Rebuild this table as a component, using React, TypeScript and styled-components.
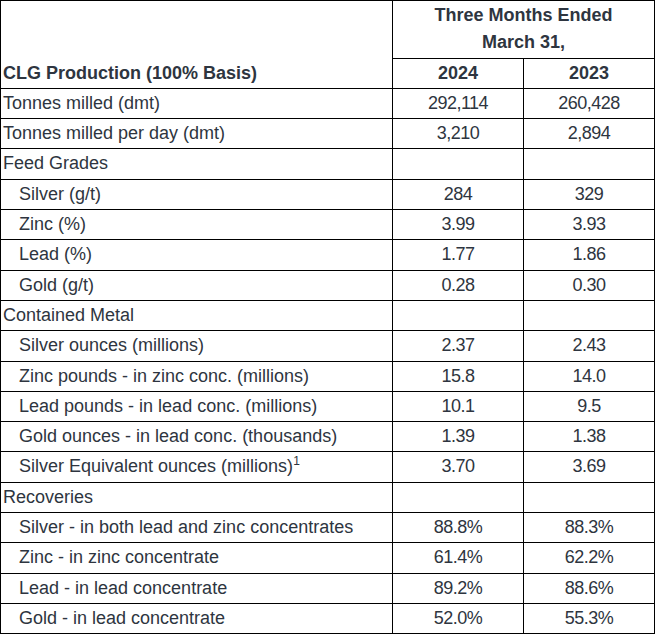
import React from 'react';
import styled, { createGlobalStyle } from 'styled-components';

const GlobalStyle = createGlobalStyle`
  body {
    margin: 0;
    background: #fff;
  }
`

type Row = {
  label: string;
  values?: [string, string];
  indent?: boolean;
  note?: string;
};

const rows: Row[] = [
  { label: 'Tonnes milled (dmt)', values: ['292,114', '260,428'] },
  { label: 'Tonnes milled per day (dmt)', values: ['3,210', '2,894'] },
  { label: 'Feed Grades' },
  { label: 'Silver (g/t)', values: ['284', '329'], indent: true },
  { label: 'Zinc (%)', values: ['3.99', '3.93'], indent: true },
  { label: 'Lead (%)', values: ['1.77', '1.86'], indent: true },
  { label: 'Gold (g/t)', values: ['0.28', '0.30'], indent: true },
  { label: 'Contained Metal' },
  { label: 'Silver ounces (millions)', values: ['2.37', '2.43'], indent: true },
  { label: 'Zinc pounds - in zinc conc. (millions)', values: ['15.8', '14.0'], indent: true },
  { label: 'Lead pounds - in lead conc. (millions)', values: ['10.1', '9.5'], indent: true },
  { label: 'Gold ounces - in lead conc. (thousands)', values: ['1.39', '1.38'], indent: true },
  { label: 'Silver Equivalent ounces (millions)', values: ['3.70', '3.69'], indent: true, note: '1' },
  { label: 'Recoveries' },
  { label: 'Silver - in both lead and zinc concentrates', values: ['88.8%', '88.3%'], indent: true },
  { label: 'Zinc - in zinc concentrate', values: ['61.4%', '62.2%'], indent: true },
  { label: 'Lead - in lead concentrate', values: ['89.2%', '88.6%'], indent: true },
  { label: 'Gold - in lead concentrate', values: ['52.0%', '55.3%'], indent: true },
];

export default function App() {
  return (
    <>
      <GlobalStyle/>
      <Table>
        <colgroup>
          <col style={{ width: 392 }}/>
          <col style={{ width: 131 }}/>
          <col style={{ width: 131 }}/>
        </colgroup>
        <thead>
          <tr>
            <HeadLabel rowSpan={2}>CLG Production (100% Basis)</HeadLabel>
            <HeadCell colSpan={2}>Three Months Ended<br/>March 31,</HeadCell>
          </tr>
          <tr>
            <HeadCell>2024</HeadCell>
            <HeadCell>2023</HeadCell>
          </tr>
        </thead>
        <tbody>
          {rows.map((row) => (
            <tr key={row.label}>
              <Label $indent={row.indent}>
                {row.label}
                {row.note && <Note>{row.note}</Note>}
              </Label>
              <Value>{row.values?.[0]}</Value>
              <Value>{row.values?.[1]}</Value>
            </tr>
          ))}
        </tbody>
      </Table>
    </>
  );
}

const Table = styled.table`
  width: 654px;
  table-layout: fixed;
  border-collapse: collapse;
  font-family: "Liberation Sans", Arial, sans-serif;
  font-size: 18px;
  line-height: 27.3px;
  color: #2e3540;

  td, th {
    border: 1px solid #000;
    padding: 1px 2px;
  }
`

const HeadLabel = styled.th`
  text-align: left;
  vertical-align: bottom;
  font-weight: 700;
`

const HeadCell = styled.th`
  text-align: center;
  font-weight: 700;
`

const Label = styled.td<{ $indent?: boolean }>`
  text-align: left;
  && {
    padding-left: ${ ({ $indent }) => $indent ? '18px' : '2px' };
  }
`

const Value = styled.td`
  text-align: center;
  letter-spacing: -0.5px;
`

const Note = styled.sup`
  font-size: 12px;
  line-height: 0;
  vertical-align: 7px;
`
